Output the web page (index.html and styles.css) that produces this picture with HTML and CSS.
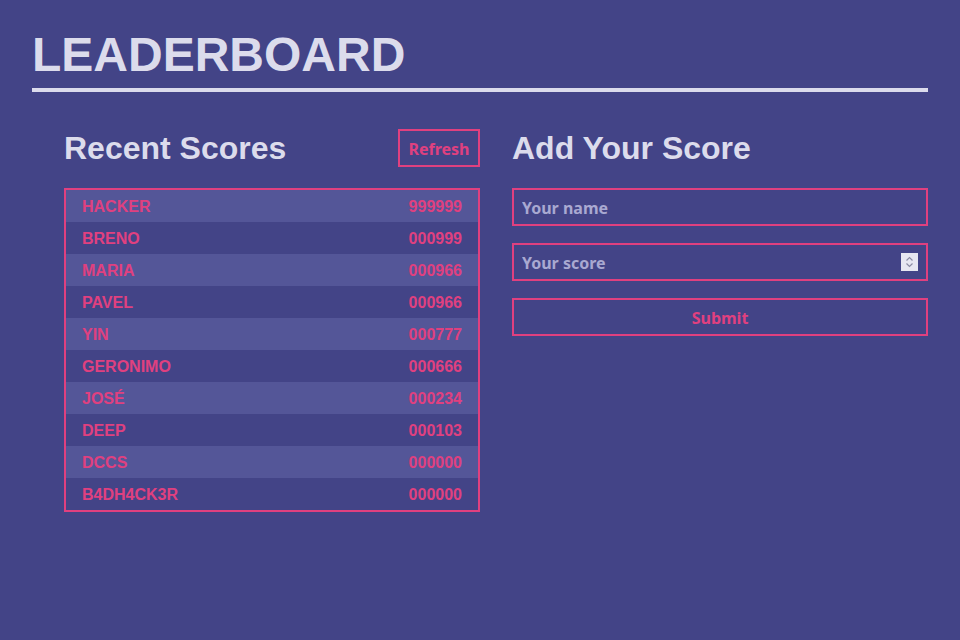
FILE: index.html
```html
<!DOCTYPE html>
<html lang="en">
<head>
<meta charset="utf-8">
<title>Leaderboard</title>
<link rel="stylesheet" href="styles.css">
</head>
<body>
<div class="page">
  <h1 class="title">LEADERBOARD</h1>
  <div class="columns">
    <section class="col">
      <div class="col-head">
        <h2 class="col-title">Recent Scores</h2>
        <button class="btn btn-refresh" type="button">Refresh</button>
      </div>
      <ul class="scores">
        <li class="row"><span>HACKER</span><span>999999</span></li>
        <li class="row"><span>BRENO</span><span>000999</span></li>
        <li class="row"><span>MARIA</span><span>000966</span></li>
        <li class="row"><span>PAVEL</span><span>000966</span></li>
        <li class="row"><span>YIN</span><span>000777</span></li>
        <li class="row"><span>GERONIMO</span><span>000666</span></li>
        <li class="row"><span>JOSÉ</span><span>000234</span></li>
        <li class="row"><span>DEEP</span><span>000103</span></li>
        <li class="row"><span>DCCS</span><span>000000</span></li>
        <li class="row"><span>B4DH4CK3R</span><span>000000</span></li>
      </ul>
    </section>
    <section class="col">
      <div class="col-head">
        <h2 class="col-title">Add Your Score</h2>
      </div>
      <form class="form">
        <input class="field" type="text" placeholder="Your name">
        <div class="field-wrap">
          <input class="field" type="text" placeholder="Your score">
          <span class="spinner">
            <svg width="17" height="18" viewBox="0 0 17 18"><rect width="17" height="18" fill="#e7e7f1"/><path d="M5.5 7.5 L8.5 4.5 L11.5 7.5" fill="none" stroke="#8c8ca4" stroke-width="1.2"/><path d="M5.5 10.5 L8.5 13.5 L11.5 10.5" fill="none" stroke="#8c8ca4" stroke-width="1.2"/></svg>
          </span>
        </div>
        <button class="btn btn-submit" type="button">Submit</button>
      </form>
    </section>
  </div>
</div>
</body>
</html>
```

FILE: styles.css
```css
html, body {
  margin: 0;
  padding: 0;
  background: #434487;
}
body {
  font-family: "Liberation Sans", Arial, sans-serif;
  color: #dcdcec;
}
.page {
  padding: 27px 32px 0 32px;
}
.title {
  margin: 0;
  font-size: 48px;
  font-weight: bold;
  line-height: 55px;
  padding-bottom: 6px;
  border-bottom: 4px solid #dcdcec;
  color: #dcdcec;
}
.columns {
  display: flex;
  gap: 32px;
  padding-left: 32px;
  padding-top: 37px;
}
.col {
  width: 416px;
}
.col-head {
  display: flex;
  align-items: center;
  justify-content: space-between;
  height: 38px;
  margin-bottom: 21px;
}
.col-title {
  margin: 0;
  font-size: 32px;
  font-weight: bold;
  line-height: 37px;
  color: #dcdcec;
}
.btn {
  font-family: "Noto Sans", "DejaVu Sans", sans-serif;
  font-weight: bold;
  font-size: 16px;
  color: #e0407f;
  background: transparent;
  border: 2px solid #e0407f;
  cursor: pointer;
}
.btn-refresh {
  height: 38px;
  width: 82px;
  padding: 1px 0 0 0;
}
.scores {
  list-style: none;
  margin: 0;
  padding: 0;
  border: 2px solid #e0407f;
}
.row {
  box-sizing: border-box;
  display: flex;
  justify-content: space-between;
  align-items: center;
  height: 32px;
  padding: 1px 16px 0 16px;
  font-size: 16px;
  font-weight: bold;
  color: #e0407f;
}
.row:nth-child(odd) {
  background: #545698;
}
.form {
  display: flex;
  flex-direction: column;
  gap: 17px;
}
.field-wrap {
  position: relative;
}
.field {
  box-sizing: border-box;
  width: 100%;
  height: 38px;
  margin: 0;
  padding: 1px 8px 0 8px;
  background: transparent;
  border: 2px solid #e0407f;
  font-family: "Noto Sans", "DejaVu Sans", sans-serif;
  font-weight: bold;
  font-size: 16px;
  color: #dcdcec;
  outline: none;
}
.field::placeholder {
  color: #a9a9d1;
  opacity: 1;
}
.spinner {
  position: absolute;
  right: 10px;
  top: 10px;
  width: 17px;
  height: 18px;
  display: block;
}
.spinner svg {
  display: block;
}
.btn-submit {
  box-sizing: border-box;
  width: 100%;
  height: 38px;
  padding: 1px 0 0 0;
}
```
